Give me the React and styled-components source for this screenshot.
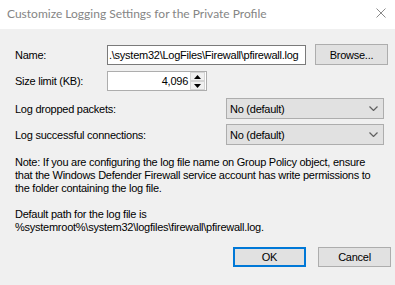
import React from 'react';
import styled, { createGlobalStyle } from 'styled-components';

const GlobalStyle = createGlobalStyle`
  html, body {
    margin: 0;
    padding: 0;
    background: #f0f0f0;
  }
  body {
    font-family: "Liberation Sans", Arial, sans-serif;
    font-size: 11px;
    letter-spacing: -0.25px;
    color: #000;
  }
`;

const Window = styled.div`
  width: 395px;
  height: 285px;
  background: #f0f0f0;
  display: flex;
  flex-direction: column;
  overflow: hidden;
`;

const TitleBar = styled.div`
  height: 29px;
  background: #fff;
  display: flex;
  align-items: center;
  justify-content: space-between;
  padding: 0 9px 3px 7px;
  box-sizing: border-box;
`;

const Title = styled.div`
  font-family: Lato, "Noto Sans", sans-serif;
  font-size: 12px;
  letter-spacing: 0;
  color: #858585;
`;

const Body = styled.div`
  padding: 15px 4px 0 15px;
  display: flex;
  flex-direction: column;
`;

const Row = styled.div`
  display: flex;
  align-items: center;
  height: ${(p) => p.$h || 21}px;
  margin-top: ${(p) => p.$mt || 0}px;
`;

const Label = styled.div`
  width: 92px;
  flex-shrink: 0;
  white-space: nowrap;
`;

const TextBox = styled.div`
  box-sizing: border-box;
  width: ${(p) => p.$w}px;
  height: 20px;
  background: #fff;
  border: 1px solid ${(p) => (p.$dark ? '#7a7a7a' : '#adadad')};
  display: flex;
  align-items: center;
  overflow: hidden;
  white-space: nowrap;
  padding: 0 1px;
`;

const Button = styled.div`
  box-sizing: border-box;
  width: 73px;
  height: ${(p) => p.$h || 21}px;
  background: #e1e1e1;
  border: ${(p) => (p.$default ? '2px solid #0078d7' : '1px solid #adadad')};
  display: flex;
  align-items: center;
  justify-content: center;
  margin-left: ${(p) => p.$ml || 0}px;
`;

const SpinValue = styled.div`
  flex: 1;
  text-align: right;
  padding-right: 2px;
`;

const Spinner = styled.div`
  width: 15px;
  height: 18px;
  display: flex;
  flex-direction: column;
`;

const SpinHalf = styled.div`
  flex: 1;
  border: 1px solid #d4d4d4;
  background: #f0f0f0;
  display: flex;
  align-items: center;
  justify-content: center;
`;

const Select = styled.div`
  box-sizing: border-box;
  width: 158px;
  height: 21px;
  margin-left: auto;
  margin-right: 7px;
  background: #e1e1e1;
  border: 1px solid #adadad;
  display: flex;
  align-items: center;
  justify-content: space-between;
  padding: 0 5px 0 3px;
`;

const Note = styled.p`
  margin: ${(p) => p.$mt}px 0 0;
  line-height: 13px;
  white-space: nowrap;
`;

const Footer = styled.div`
  display: flex;
  justify-content: flex-end;
  margin-top: 13px;
`;

const Arrow = ({ up }) => (
  <svg width="7" height="4" viewBox="0 0 7 4">
    <path d={up ? 'M0 4 L3.5 0 L7 4 Z' : 'M0 0 L3.5 4 L7 0 Z'} fill="#000" />
  </svg>
);

const Chevron = () => (
  <svg width="9" height="5" viewBox="0 0 9 5">
    <path d="M0.5 0.5 L4.5 4.5 L8.5 0.5" fill="none" stroke="#606060" strokeWidth="1.2" />
  </svg>
);

const CloseIcon = () => (
  <svg width="10" height="10" viewBox="0 0 10 10">
    <path d="M0.5 0.5 L9.5 9.5 M9.5 0.5 L0.5 9.5" stroke="#8a8a8a" strokeWidth="1" />
  </svg>
);

function App() {
  return (
    <>
      <GlobalStyle />
      <Window>
        <TitleBar>
          <Title>Customize Logging Settings for the Private Profile</Title>
          <CloseIcon />
        </TitleBar>
        <Body>
          <Row>
            <Label>Name:</Label>
            <TextBox $w={199} $dark>
              .\system32\LogFiles\Firewall\pfirewall.log
            </TextBox>
            <Button $ml={9}>Browse...</Button>
          </Row>
          <Row $h={20} $mt={6}>
            <Label>Size limit (KB):</Label>
            <TextBox $w={100}>
              <SpinValue>4,096</SpinValue>
              <Spinner>
                <SpinHalf><Arrow up /></SpinHalf>
                <SpinHalf><Arrow /></SpinHalf>
              </Spinner>
            </TextBox>
          </Row>
          <Row $mt={7}>
            <Label>Log dropped packets:</Label>
            <Select>
              No (default)
              <Chevron />
            </Select>
          </Row>
          <Row $mt={5}>
            <Label>Log successful connections:</Label>
            <Select>
              No (default)
              <Chevron />
            </Select>
          </Row>
          <Note $mt={11}>
            Note: If you are configuring the log file name on Group Policy object, ensure
            <br />
            that the Windows Defender Firewall service account has write permissions to
            <br />
            the folder containing the log file.
          </Note>
          <Note $mt={13}>
            Default path for the log file is
            <br />
            %systemroot%\system32\logfiles\firewall\pfirewall.log.
          </Note>
          <Footer>
            <Button $h={20} $default>OK</Button>
            <Button $h={20} $ml={12}>Cancel</Button>
          </Footer>
        </Body>
      </Window>
    </>
  );
}

export default App;
